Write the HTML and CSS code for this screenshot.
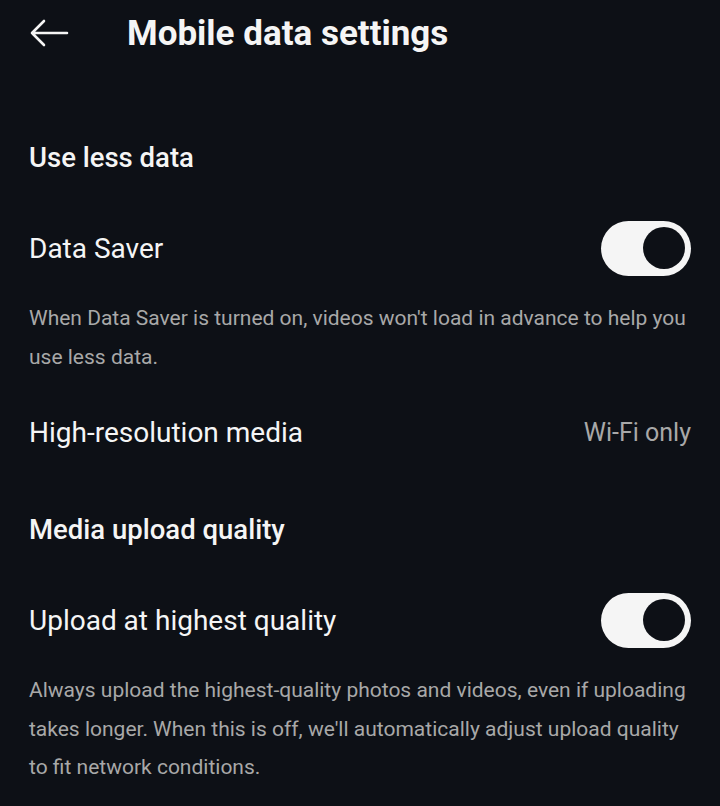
FILE: index.html
```html
<!DOCTYPE html>
<html lang="en">
<head>
    <meta charset="UTF-8">
    <meta name="viewport" content="width=device-width, initial-scale=1.0">
    <title>Mobile data settings</title>
    <link rel="stylesheet" href="styles.css">
</head>
<body>
    <div class="screen">
        <header class="top-bar">
            <svg class="back-icon" viewBox="0 0 40 30" width="40" height="30">
                <path d="M38 15H3M15 3L3 15l12 12" fill="none" stroke="#f5f5f5" stroke-width="2.6" stroke-linecap="round" stroke-linejoin="round"/>
            </svg>
            <h1>Mobile data settings</h1>
        </header>

        <h2 class="section-title first">Use less data</h2>

        <div class="setting-row">
            <span class="setting-label">Data Saver</span>
            <div class="toggle on"><div class="knob"></div></div>
        </div>
        <p class="setting-desc">When Data Saver is turned on, videos won't load in advance to help you use less data.</p>

        <div class="setting-row plain">
            <span class="setting-label">High-resolution media</span>
            <span class="setting-value">Wi-Fi only</span>
        </div>

        <h2 class="section-title">Media upload quality</h2>

        <div class="setting-row">
            <span class="setting-label">Upload at highest quality</span>
            <div class="toggle on"><div class="knob"></div></div>
        </div>
        <p class="setting-desc">Always upload the highest-quality photos and videos, even if uploading takes longer. When this is off, we'll automatically adjust upload quality to fit network conditions.</p>
    </div>
</body>
</html>
```

FILE: styles.css
```css
html, body {
    margin: 0;
    padding: 0;
    background-color: #0d1016;
}
body {
    font-family: Roboto, "Noto Sans", Arial, sans-serif;
    color: #f5f5f5;
}
.screen {
    width: 720px;
    height: 806px;
    overflow: hidden;
    padding: 0 29px;
    box-sizing: border-box;
}
.top-bar {
    display: flex;
    align-items: center;
    height: 66px;
    gap: 58px;
}
.back-icon {
    display: block;
}
h1 {
    margin: 0;
    font-size: 35px;
    font-weight: 700;
}
.section-title {
    margin: 52px 0 0;
    font-size: 27.5px;
    font-weight: 500;
    line-height: 36px;
}
.section-title.first {
    margin-top: 74px;
}
.setting-row {
    display: flex;
    align-items: center;
    justify-content: space-between;
    height: 56px;
    margin-top: 44px;
}
.section-title + .setting-row {
    margin-top: 44px;
}
.setting-row.plain {
    margin-top: 28px;
}
.setting-label {
    font-size: 28px;
}
.setting-value {
    font-size: 25px;
    color: #a8a8a8;
}
.toggle {
    width: 90px;
    height: 55px;
    border-radius: 28px;
    background-color: #f5f5f5;
    display: flex;
    align-items: center;
    justify-content: flex-end;
    padding: 0 6px;
    box-sizing: border-box;
}
.knob {
    width: 42px;
    height: 42px;
    border-radius: 50%;
    background-color: #0d1016;
}
.setting-desc {
    margin: 23px 0 0;
    font-size: 21px;
    line-height: 38.5px;
    color: #a8a8a8;
}
```
